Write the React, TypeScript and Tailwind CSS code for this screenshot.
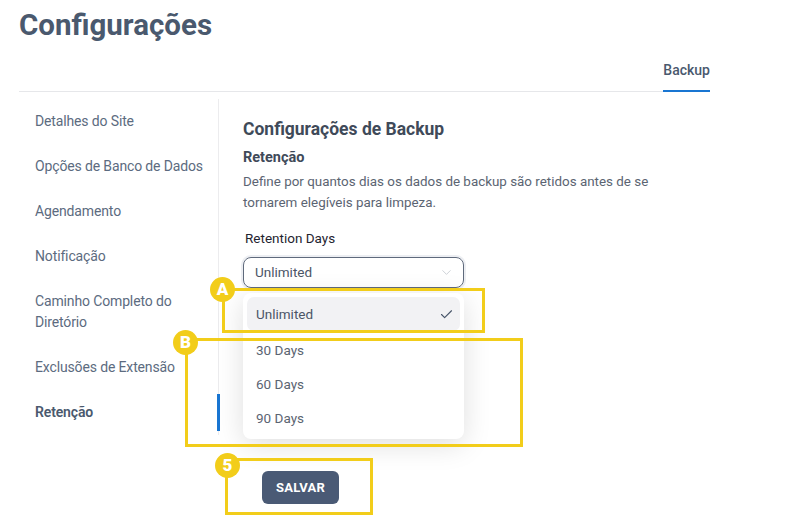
import { Check, ChevronDown } from "lucide-react";

const sideItems = [
  "Detalhes do Site",
  "Opções de Banco de Dados",
  "Agendamento",
  "Notificação",
  "Caminho Completo do Diretório",
  "Exclusões de Extensão",
  "Retenção",
];

const options = ["Unlimited", "30 Days", "60 Days", "90 Days"];

// Yellow callout box with a lettered badge on its top-left corner.
function Callout({
  label,
  className,
  badgeClass,
}: {
  label: string;
  className: string;
  badgeClass: string;
}) {
  return (
    <div className={`pointer-events-none absolute z-20 border-[3px] border-[#f2cd1a] ${className}`}>
      <span
        className={`absolute flex h-[25px] w-[25px] items-center justify-center rounded-full bg-[#f2cd1a] text-[17px] font-black leading-none text-white ${badgeClass}`}
      >
        {label}
      </span>
    </div>
  );
}

export default function App() {
  return (
    <div className="relative min-h-screen bg-white font-['Roboto',sans-serif]">
      <div className="box-content w-[691px] pl-[19px]">
        <h1 className="pt-[7px] text-[29.5px] font-bold leading-[36px] text-[#4a596e]">
          Configurações
        </h1>

        {/* Tabs */}
        <div className="mt-[15px] flex justify-end border-b border-[#e6e7ea]">
          <div className="relative -mb-px border-b-[2px] border-[#1976d2] pb-[10px] pt-[2px] text-[14px] font-medium leading-[20px] text-[#4a596e]">
            Backup
          </div>
        </div>

        <div className="flex items-start">
          {/* Sidebar */}
          <nav className="mt-[7px] w-[200px] shrink-0 border-r border-[#ececee]">
            {sideItems.map((item) => {
              const active = item === "Retenção";
              return (
                <div
                  key={item}
                  className={`relative py-3 pl-4 pr-2 text-[14px] leading-[21px] tracking-[-0.01em] ${
                    active ? "font-semibold text-[#4a596e]" : "text-[#5c6b80]"
                  }`}
                >
                  {item}
                  {active && (
                    <span className="absolute -right-[2px] top-[4px] h-[37px] w-[3px] bg-[#1976d2]" />
                  )}
                </div>
              );
            })}
          </nav>

          {/* Content */}
          <section className="flex-1 pl-6 pt-[25px]">
            <h2 className="text-[17.5px] font-bold leading-[24px] text-[#3f4a59]">
              Configurações de Backup
            </h2>
            <h3 className="mt-[7px] text-[14.5px] font-bold leading-[20px] text-[#3f4a59]">
              Retenção
            </h3>
            <p className="mt-[3px] w-[430px] text-[13.4px] leading-[21px] text-[#5b6472]">
              Define por quantos dias os dados de backup são retidos antes de se tornarem
              elegíveis para limpeza.
            </p>

            <label className="mt-[16px] block pl-[2px] text-[13.5px] leading-[18px] text-[#1f2430]">
              Retention Days
            </label>

            <div className="relative mt-[10px] w-[221px]">
              <div className="flex h-[31px] items-center justify-between rounded-[8px] border-[1.5px] border-[#5f6a7c] pl-[11px] pr-[9px] text-[13.5px] text-[#4b5566] shadow-[0_0_0_2px_rgba(148,163,184,0.18)]">
                <span>Unlimited</span>
                <ChevronDown className="h-[15px] w-[15px] text-[#c3c7ce]" strokeWidth={1.3} />
              </div>

              {/* Dropdown */}
              <div className="absolute left-0 top-[36px] z-10 w-[221px] rounded-[8px] bg-white p-1 shadow-[0_6px_28px_rgba(0,0,0,0.13)]">
                {options.map((opt, i) => (
                  <div
                    key={opt}
                    className={`flex h-[34px] items-center justify-between rounded-[7px] pl-[9px] pr-[6px] text-[13.5px] ${
                      i === 0 ? "mb-[2px] bg-[#f2f2f4] text-[#4b5566]" : "text-[#5b6472]"
                    }`}
                  >
                    <span>{opt}</span>
                    {i === 0 && <Check className="h-[15px] w-[15px] text-[#475569]" strokeWidth={1.8} />}
                  </div>
                ))}
              </div>
            </div>

            <div className="mt-[183px] pl-[19px]">
              <button
                type="button"
                className="h-[33px] w-[77px] rounded-[6px] bg-[#4a5a75] text-[13px] font-bold tracking-[0.02em] text-white"
              >
                SALVAR
              </button>
            </div>
          </section>
        </div>
      </div>

      {/* Annotation callouts */}
      <Callout
        label="A"
        className="left-[222px] top-[288px] h-[45px] w-[263px]"
        badgeClass="-left-[15px] -top-[14px]"
      />
      <Callout
        label="B"
        className="left-[185px] top-[338px] h-[109px] w-[338px]"
        badgeClass="-left-[15px] -top-[11px]"
      />
      <Callout
        label="5"
        className="left-[225px] top-[458px] h-[57px] w-[148px]"
        badgeClass="-left-[13px] -top-[8px]"
      />
    </div>
  );
}
